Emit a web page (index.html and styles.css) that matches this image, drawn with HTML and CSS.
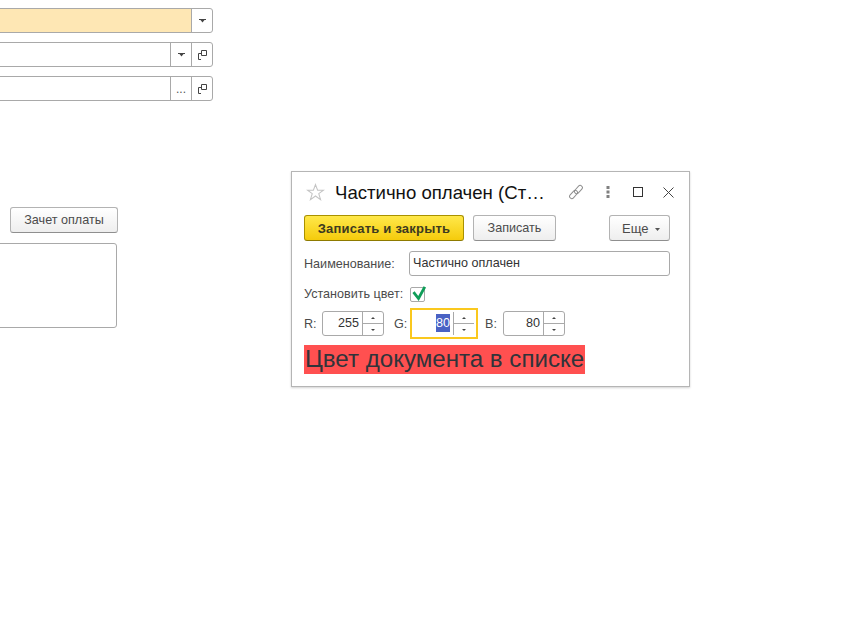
FILE: index.html
```html
<!DOCTYPE html>
<html lang="ru">
<head>
<meta charset="utf-8">
<title>Частично оплачен</title>
<link rel="stylesheet" href="styles.css">
</head>
<body>
<main class="desktop">
  <section class="form">
    <div class="field field-required">
      <div class="field-input"></div>
      <button class="field-btn"><svg width="7" height="4" viewBox="0 0 7 4"><path d="M0 0h7v1H5.500L3.500 3.500 1.500 1H0z" fill="#444"/></svg></button>
    </div>
    <div class="field">
      <div class="field-input"></div>
      <button class="field-btn"><svg width="7" height="4" viewBox="0 0 7 4"><path d="M0 0h7v1H5.500L3.500 3.500 1.500 1H0z" fill="#444"/></svg></button>
      <button class="field-btn"><svg width="9" height="10" viewBox="0 0 9 10"><path d="M3.500 .5h5v5h-5zM3 3.500H.5v6H3" fill="none" stroke="#444"/></svg></button>
    </div>
    <div class="field">
      <div class="field-input"></div>
      <button class="field-btn dots">...</button>
      <button class="field-btn"><svg width="9" height="10" viewBox="0 0 9 10"><path d="M3.500 .5h5v5h-5zM3 3.500H.5v6H3" fill="none" stroke="#444"/></svg></button>
    </div>
    <button class="btn btn-offset">Зачет оплаты</button>
    <div class="memo"></div>
  </section>

  <section class="window">
    <header class="win-head">
      <svg class="star" width="19" height="19" viewBox="0 0 18 18"><path d="M9 1.500l2 5.300h5.500l-4.400 3.300 1.700 5.600L9 12.300l-4.800 3.400 1.700-5.600-4.400-3.300H7z" fill="#fff" stroke="#c4c4c4"/></svg>
      <h1 class="win-title">Частично оплачен (Ст…</h1>
      <div class="win-tools">
        <svg class="tool-link" width="16" height="16" viewBox="0 0 16 16"><g fill="none" stroke="#8f8f8f"><rect x="0.800" y="8.300" width="9.500" height="4.400" rx="2.200" transform="rotate(-48 5.500 10.500)"/><rect x="5.700" y="3.300" width="9.500" height="4.400" rx="2.200" transform="rotate(-48 10.500 5.500)"/></g></svg>
        <svg class="tool-more" width="4" height="14" viewBox="0 0 4 14"><g fill="#808080"><rect x="0.500" y="1" width="3" height="3"/><rect x="0.500" y="5.500" width="3" height="3"/><rect x="0.500" y="10" width="3" height="3"/></g></svg>
        <svg class="tool-max" width="10" height="10" viewBox="0 0 10 10"><rect x=".5" y=".5" width="9" height="9" fill="none" stroke="#333"/></svg>
        <svg class="tool-close" width="11" height="11" viewBox="0 0 11 11"><path d="M.5 .5l10 10M10.500 .5l-10 10" stroke="#444" stroke-width="1" fill="none"/></svg>
      </div>
    </header>
    <div class="toolbar">
      <button class="btn btn-primary">Записать и закрыть</button>
      <button class="btn btn-save">Записать</button>
      <button class="btn btn-more">Еще <svg width="5" height="3" viewBox="0 0 5 3"><path d="M0 0h5L2.500 3z" fill="#555"/></svg></button>
    </div>
    <div class="row row-name">
      <label class="label">Наименование:</label>
      <div class="text-input">Частично оплачен</div>
    </div>
    <div class="row row-check">
      <label class="label">Установить цвет:</label>
      <span class="checkbox"><svg width="16" height="16" viewBox="0 0 16 16"><path d="M2.500 6.200l5 6.300L13.800 .8" fill="none" stroke="#0f9d58" stroke-width="2.800"/></svg></span>
    </div>
    <div class="row row-rgb">
      <label class="label label-r">R:</label>
      <div class="spin"><span class="spin-val">255</span><span class="spin-btns"><i class="up"></i><i class="down"></i></span></div>
      <label class="label label-g">G:</label>
      <div class="spin-focus"><div class="spin spin-active"><span class="spin-val"><mark class="sel">80</mark></span><span class="spin-btns"><i class="up"></i><i class="down"></i></span></div></div>
      <label class="label label-b">B:</label>
      <div class="spin"><span class="spin-val">80</span><span class="spin-btns"><i class="up"></i><i class="down"></i></span></div>
    </div>
    <div class="preview">Цвет документа в списке</div>
  </section>
</main>
</body>
</html>
```
FILE: styles.css
```css
* { box-sizing: border-box; }
html, body { margin: 0; height: 100%; background: #fff; overflow: hidden; }
body { font: 12.6px "Liberation Sans", Arial, sans-serif; color: #4b4b4b; }
.desktop { position: relative; width: 865px; height: 637px; overflow: hidden; }

.form { display: flex; flex-direction: column; width: 223px; margin-left: -10px; padding-top: 8px; }
.field { display: flex; height: 25px; margin-bottom: 9px; border: 1px solid #a9a9a9; border-radius: 3px; background: #fff; }
.field:nth-child(3) { margin-bottom: 0; }
.field-required .field-input { background: #fee7b4; }
.field-input { flex: 1; }
.field-btn { width: 21px; padding: 0; border: 0; border-left: 1px solid #a9a9a9; background: transparent; display: flex; align-items: center; justify-content: center; font: 12px "Liberation Sans", Arial, sans-serif; color: #555; }
.dots { align-items: flex-end; padding-bottom: 4px; }

.btn { height: 26px; padding: 0; border: 1px solid #b3b3b3; border-bottom-color: #8f8f8f; border-radius: 3px; background: linear-gradient(#fff, #eee); font: 12.6px "Liberation Sans", Arial, sans-serif; color: #4b4b4b; }
.btn-offset { width: 108px; margin: 106px 0 0 20px; }
.memo { height: 85px; width: 127px; margin-top: 10px; border: 1px solid #a9a9a9; border-radius: 3px; }

.window { position: absolute; left: 291px; top: 171px; width: 399px; height: 216px; padding: 0 19px 0 12px; background: #fff; border: 1px solid #b5b5b5; box-shadow: 0 1px 2px rgba(0,0,0,.18); }
.win-head { display: flex; align-items: center; height: 40px; padding-left: 2px; }
.star { margin-right: 10px; margin-top: 1px; }
.win-title { margin: 2px 0 0; font: 18.6px "Liberation Sans", Arial, sans-serif; color: #111; white-space: nowrap; }
.win-tools { position: absolute; top: 12px; left: 276px; right: 12px; height: 16px; display: flex; align-items: center; }
.tool-link { margin-right: 22px; }
.tool-more { margin-right: 23px; }
.tool-max { margin-right: 20px; }

.toolbar { display: flex; height: 26px; margin-top: 3px; }
.btn-primary { width: 160px; background: linear-gradient(#ffe84a, #f5cb0c); border-color: #a99100; border-bottom-color: #8e7a00; color: #3d3a20; font-size: 13px; letter-spacing: .2px; font-weight: bold; }
.btn-save { width: 83px; margin-left: 9px; }
.btn-more { width: 61px; margin-left: auto; padding-left: 3px; font-size: 13px; }
.btn-more svg { margin-left: 3px; vertical-align: middle; }

.row { display: flex; align-items: center; }
.label { color: #4b4b4b; white-space: nowrap; }
.row-name { height: 25px; margin-top: 10px; }
.row-name .label { width: 105px; }
.text-input { width: 261px; height: 25px; line-height: 23px; padding-left: 3px; border: 1px solid #a9a9a9; border-radius: 3px; color: #333; }
.row-check { height: 20px; margin-top: 8px; }
.row-check .label { width: 106px; }
.checkbox { width: 15px; height: 15px; border: 1px solid #a9a9a9; border-radius: 2px; display: block; position: relative; }
.checkbox svg { position: absolute; left: 0; top: -2px; }

.row-rgb { height: 31px; margin-top: 4px; }
.spin { display: flex; width: 62px; height: 25px; border: 1px solid #a9a9a9; border-radius: 3px; }
.label-r { width: 18px; }
.spin-val { width: 39px; line-height: 23px; text-align: right; padding-right: 3px; color: #333; }
.spin-btns { flex: 1; display: flex; flex-direction: column; border-left: 1px solid #a9a9a9; }
.spin-btns i { flex: 1; display: flex; align-items: center; justify-content: center; }
.spin-btns .up { border-bottom: 1px solid #a9a9a9; }
.up::after { content: ""; border: 2px solid transparent; border-top: 0; border-bottom-color: #444; }
.down::after { content: ""; border: 2px solid transparent; border-bottom: 0; border-top-color: #444; }
.label-g { width: 16px; margin-left: 10px; }
.spin-focus { width: 68px; height: 31px; border: 2px solid #fac81e; padding: 1px 0 0 1px; }
.spin-active { border-color: transparent; width: 62px; }
.spin-active .spin-btns { border-left-color: #a9a9a9; }
.sel { background: #4a62c4; color: #fff; padding: 2px 0; }
.label-b { width: 18px; margin-left: 7px; }

.preview { width: fit-content; height: 29px; margin-top: 6px; padding: 0 1px; background: #ff5050; font-size: 24.1px; line-height: 28px; color: #30343a; white-space: nowrap; }
```
